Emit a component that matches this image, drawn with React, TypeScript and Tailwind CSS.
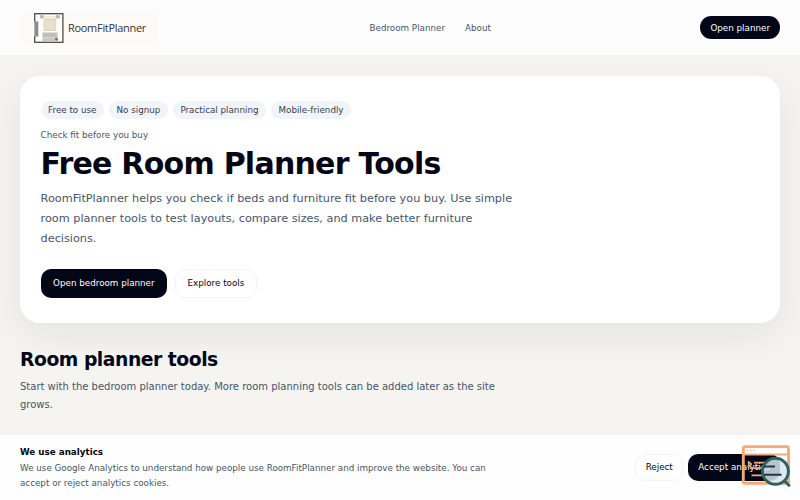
import React from "react";

const chips = ["Free to use", "No signup", "Practical planning", "Mobile-friendly"];

function RoomMark() {
  return (
    <svg className="h-[30px] w-[30px] shrink-0" viewBox="0 0 30 30" fill="none">
      <rect x="0.7" y="0.7" width="28.2" height="28.6" fill="#fffdfa" stroke="#4b4b4c" strokeWidth="1.3" />
      <rect x="0" y="8.5" width="4.3" height="15" fill="#8b8d8d" />
      <path d="M0.5 9v14" stroke="#b7b7b4" />
      <rect x="6" y="2.2" width="3.8" height="3.2" fill="#b9b9b4" />
      <rect x="22" y="2.2" width="3.8" height="3.2" fill="#b9b9b4" />
      <rect x="10" y="3" width="12" height="4" fill="#eeebe3" />
      <rect x="10" y="6.5" width="11.8" height="11" fill="#e9e0ca" stroke="#d6cbb0" strokeWidth="0.7" />
      <rect x="8.5" y="19.5" width="15" height="5" fill="#bfc0bc" />
      <rect x="8.5" y="24.5" width="15.5" height="3.5" fill="#cfc8b7" />
      <circle cx="22.5" cy="26" r="1.6" fill="#7a7d73" />
    </svg>
  );
}

function InspectBadge() {
  return (
    <svg className="absolute left-[741px] top-[444px] h-[46px] w-[51px]" viewBox="0 0 51 46" fill="none">
      <rect x="2.3" y="2.6" width="45.2" height="36.6" rx="2" stroke="#f3aa75" strokeWidth="2.9" />
      <path d="M2.3 10.6h45.2" stroke="#f3aa75" strokeWidth="2" />
      <path d="M5.8 6.4h1.4M9 6.4h1.4M12.2 6.4h1.4" stroke="#f3aa75" strokeWidth="1.5" />
      <path d="M7 17.5l3.2 2.5L7 23.3M13 18.7h11M9 24.2h13M10.5 31.3h11" stroke="#f3aa75" strokeWidth="1.7" />
      <circle cx="34.4" cy="27.3" r="13" fill="#d9e5ef" fillOpacity="0.85" stroke="#2c6264" strokeWidth="2.9" />
      <path d="M23 22.4h11M23 30.8h17.5" stroke="#1d3946" strokeWidth="2" />
      <path d="M43.6 36.8l5.2 5.4" stroke="#2c6264" strokeWidth="3" />
    </svg>
  );
}

export default function App() {
  return (
    <div className="relative h-[500px] w-[800px] overflow-hidden bg-[#f5f4f0] font-['DejaVu_Sans',sans-serif] text-[8.75px] text-[#020617]">
      <header className="flex h-[55px] items-center justify-between bg-[#fdfdfd] px-5">
        <div className="flex h-9 w-[139px] items-center gap-[4px] bg-[#fefaf8] pl-[14px]">
          <RoomMark />
          <span className="font-['Open_Sans',sans-serif] text-[11px] leading-none tracking-[-0.3px] text-[#333336]">RoomFitPlanner</span>
        </div>
        <nav className="ml-[71px] flex gap-5 pt-px leading-[12.5px] text-[#475569]">
          <span>Bedroom Planner</span>
          <span>About</span>
        </nav>
        <button className="ml-[70px] h-[22.5px] rounded-[11.25px] bg-[#020617] px-[10px] pt-[1.5px] text-white">Open planner</button>
      </header>

      <main className="px-5 pt-[21.25px]">
        <section className="h-[246.25px] rounded-[20px] bg-white px-[20.6px] pt-[25px] shadow-[0_12px_38px_rgba(15,23,42,0.075)]">
          <div className="flex gap-[5px]">
            {chips.map((chip) => (
              <span key={chip} className="h-[17.5px] rounded-full bg-[#f1f5f9] px-[7.5px] leading-[18px] text-[#334155]">{chip}</span>
            ))}
          </div>
          <p className="mt-[10px] leading-[12.5px] text-[#475569]">Check fit before you buy</p>
          <h1 className="mt-[8px] text-[30px] font-bold leading-[30px] tracking-[-0.75px]">Free Room Planner Tools</h1>
          <p className="mt-[10px] w-[480px] text-[11.25px] leading-5 text-[#475569]">
            RoomFitPlanner helps you check if beds and furniture fit before you buy. Use simple room planner tools to test layouts, compare sizes, and make better furniture decisions.
          </p>
          <div className="mt-5 flex gap-[7.5px]">
            <button className="h-[28.75px] rounded-[10px] bg-[#020617] px-[12.5px] text-white">Open bedroom planner</button>
            <button className="h-[28.75px] rounded-[10px] border border-[#f1f4f8] bg-white px-[12px]">Explore tools</button>
          </div>
        </section>
        <section className="pt-[26.5px]">
          <h2 className="text-[18.75px] font-bold leading-[22.5px] tracking-[-0.47px]">Room planner tools</h2>
          <p className="mt-[6.75px] w-[480px] text-[10px] leading-[17.5px] text-[#475569]">
            Start with the bedroom planner today. More room planning tools can be added later as the site grows.
          </p>
        </section>
      </main>

      <aside className="absolute inset-x-0 bottom-0 flex h-[65px] items-center justify-between bg-[#fefefe] px-5 shadow-[0_-2px_8px_rgba(15,23,42,0.02)]">
        <div className="w-[480px] pt-[1.2px]">
          <p className="font-bold leading-[12.5px]">We use analytics</p>
          <p className="mt-[2.5px] leading-[15px] text-[#475569]">
            We use Google Analytics to understand how people use RoomFitPlanner and improve the website. You can accept or reject analytics cookies.
          </p>
        </div>
        <div className="flex gap-[5px]">
          <button className="h-[27px] rounded-[10px] border border-[#f1f4f8] bg-white px-[9.5px]">Reject</button>
          <button className="h-[27px] whitespace-nowrap rounded-[10px] bg-[#020617] px-[10px] text-white">Accept analytics</button>
        </div>
      </aside>
      <InspectBadge />
    </div>
  );
}
